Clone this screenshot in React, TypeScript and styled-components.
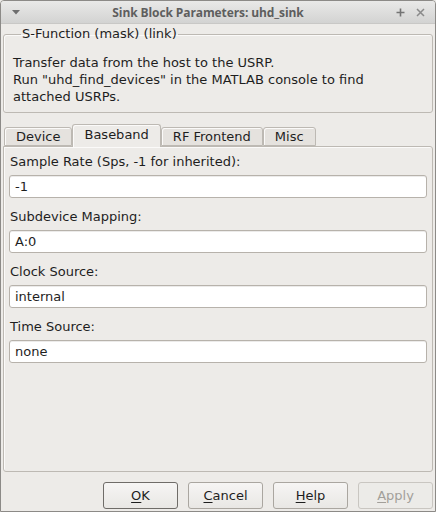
import React from "react";
import styled, { createGlobalStyle } from "styled-components";

const Global = createGlobalStyle`
  html, body { margin: 0; padding: 0; background: #edebe8; }
  * { box-sizing: border-box; }
`;

const Window = styled.div`
  width: 436px;
  height: 512px;
  display: flex;
  flex-direction: column;
  background: #edebe8;
  border: 1px solid #8c8a87;
  border-radius: 4px 4px 0 0;
  overflow: hidden;
  font-family: "DejaVu Sans", "Liberation Sans", sans-serif;
  font-size: 13px;
  color: #1e1e1e;
`;

const TitleBar = styled.div`
  height: 23px;
  flex: none;
  display: flex;
  align-items: center;
  padding: 0 10px 0 11px;
  background: linear-gradient(#e9e9e8, #d3d3d2);
  border-bottom: 1px solid #c9c8c6;
`;

const TitleText = styled.div`
  flex: 1;
  text-align: center;
  font-family: "Open Sans", "DejaVu Sans", sans-serif;
  font-weight: 700;
  font-size: 12px;
  color: #5e5e5e;
  letter-spacing: -0.1px;
`;

const TitleIcons = styled.div`
  display: flex;
  gap: 11px;
  align-items: center;
`;

const Body = styled.div`
  flex: 1;
  display: flex;
  flex-direction: column;
  padding: 2px;
`;

const Group = styled.fieldset`
  margin: 0;
  padding: 12px 9px 7px 9px;
  border: 1px solid #bdb9b3;
  border-radius: 3px;
  box-shadow: inset 1px 1px 0 #fbfaf9;
`;

const Legend = styled.legend`
  padding: 0 1px;
  margin-left: 8px;
  line-height: 16px;
`;

const Desc = styled.div`
  line-height: 17px;
`;

const TabBar = styled.div`
  display: flex;
  align-items: flex-end;
  margin-top: 11px;
  padding-left: 1px;
  position: relative;
  z-index: 1;
`;

const Tab = styled.div<{ $active?: boolean }>`
  padding: 0 11px;
  border: 1px solid #bdb9b3;
  border-bottom: ${(p) => (p.$active ? "none" : "1px solid #bdb9b3")};
  border-radius: 3px 3px 0 0;
  background: ${(p) => (p.$active ? "#edebe8" : "#e5e2de")};
  height: ${(p) => (p.$active ? "23px" : "19px")};
  line-height: ${(p) => (p.$active ? "20px" : "18px")};
  margin-bottom: ${(p) => (p.$active ? "-1px" : "0")};
  box-shadow: inset 1px 1px 0 #fbfaf9;
`;

const Pane = styled.div`
  flex: 1;
  border: 1px solid #bdb9b3;
  border-radius: 0 3px 3px 3px;
  box-shadow: inset 1px 1px 0 #fbfaf9;
  padding: 7px 5px 6px 5px;
  display: flex;
  flex-direction: column;
  gap: 11px;
`;

const Field = styled.div`
  display: flex;
  flex-direction: column;
  gap: 5px;
`;

const Label = styled.div`
  line-height: 16px;
  padding-left: 1px;
`;

const Input = styled.div`
  height: 23px;
  background: #ffffff;
  border: 1px solid #b7b2ab;
  border-radius: 3px;
  padding-left: 5px;
  line-height: 21px;
  box-shadow: inset 0 1px 0 #ecebea;
`;

const ButtonRow = styled.div`
  display: flex;
  justify-content: flex-end;
  gap: 10px;
  margin-top: 10px;
`;

const Button = styled.div<{ $default?: boolean; $disabled?: boolean }>`
  width: 75px;
  height: 27px;
  display: flex;
  align-items: center;
  justify-content: center;
  border: 1px solid ${(p) => (p.$default ? "#6f6c68" : p.$disabled ? "#c9c6c1" : "#aaa6a0")};
  border-radius: 3px;
  background: ${(p) => (p.$disabled ? "#ecebe8" : "linear-gradient(#f6f5f4, #e9e7e4)")};
  color: ${(p) => (p.$disabled ? "#a29f9a" : "#1e1e1e")};
  u { text-decoration-thickness: 1px; text-underline-offset: 2px; }
`;

export default function App() {
  return (
    <>
      <Global />
      <Window>
        <TitleBar>
          <svg width="8" height="5" viewBox="0 0 8 5">
            <path d="M0 0 H8 L4 4.5 Z" fill="#6e6e6e" />
          </svg>
          <TitleText>Sink Block Parameters: uhd_sink</TitleText>
          <TitleIcons>
            <svg width="9" height="9" viewBox="0 0 9 9">
              <path d="M4.5 0.5 V8.5 M0.5 4.5 H8.5" stroke="#747474" strokeWidth="1.6" />
            </svg>
            <svg width="9" height="9" viewBox="0 0 9 9">
              <path d="M1 1 L8 8 M8 1 L1 8" stroke="#8a8a8a" strokeWidth="1.5" />
            </svg>
          </TitleIcons>
        </TitleBar>
        <Body>
          <Group>
            <Legend>S-Function (mask) (link)</Legend>
            <Desc>
              Transfer data from the host to the USRP.
              <br />
              Run "uhd_find_devices" in the MATLAB console to find
              <br />
              attached USRPs.
            </Desc>
          </Group>
          <TabBar>
            <Tab>Device</Tab>
            <Tab $active>Baseband</Tab>
            <Tab>RF Frontend</Tab>
            <Tab>Misc</Tab>
          </TabBar>
          <Pane>
            <Field>
              <Label>Sample Rate (Sps, -1 for inherited):</Label>
              <Input>-1</Input>
            </Field>
            <Field>
              <Label>Subdevice Mapping:</Label>
              <Input>A:0</Input>
            </Field>
            <Field>
              <Label>Clock Source:</Label>
              <Input>internal</Input>
            </Field>
            <Field>
              <Label>Time Source:</Label>
              <Input>none</Input>
            </Field>
          </Pane>
          <ButtonRow>
            <Button $default>
              <span><u>O</u>K</span>
            </Button>
            <Button>
              <span><u>C</u>ancel</span>
            </Button>
            <Button>
              <span><u>H</u>elp</span>
            </Button>
            <Button $disabled>
              <span><u>A</u>pply</span>
            </Button>
          </ButtonRow>
        </Body>
      </Window>
    </>
  );
}
